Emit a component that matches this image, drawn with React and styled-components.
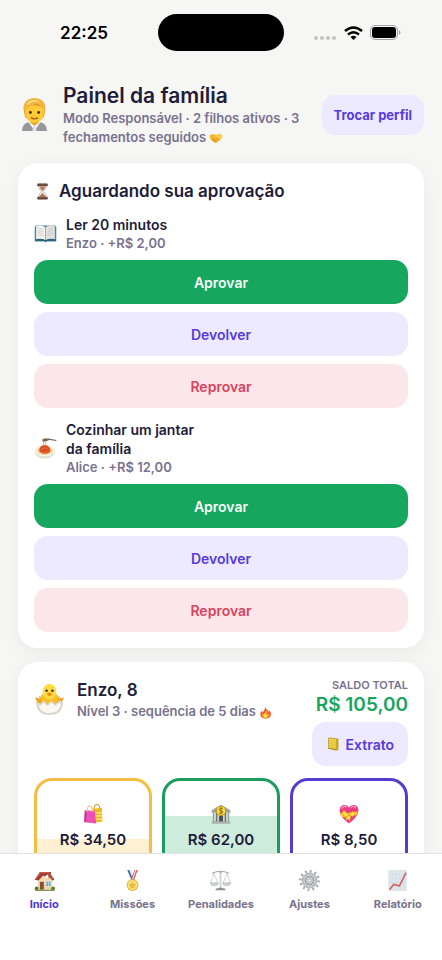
import styled, { createGlobalStyle } from "styled-components";

const GlobalStyle = createGlobalStyle`
  * {
    box-sizing: border-box;
  }
  body {
    margin: 0;
    background: #f6f6f4;
    color: #211c39;
    font-family: Inter, "Liberation Sans", sans-serif;
  }
  h1, h2, p {
    margin: 0;
  }
  button {
    font-family: inherit;
    cursor: pointer;
  }
`;

const Screen = styled.div`
  display: flex;
  flex-direction: column;
  height: 100vh;
`;

const StatusBar = styled.div`
  flex: none;
  display: grid;
  grid-template-columns: 1fr 126px 1fr;
  align-items: center;
  height: 51px;
  padding-top: 14px;
`;

const Clock = styled.span`
  padding-left: 10px;
  text-align: center;
  font-size: 17px;
  line-height: 24px;
  font-weight: 600;
  color: #000;
`;

const Island = styled.div`
  height: 37px;
  border-radius: 19px;
  background: #000;
`;

const StatusIcons = styled.div`
  display: flex;
  align-items: center;
  justify-content: center;
  gap: 7px;
  padding-right: 10px;
`;

const Content = styled.main`
  flex: 1;
  min-height: 0;
  overflow-y: auto;
  scrollbar-width: none;
  display: flex;
  flex-direction: column;
  gap: 14px;
  padding: 31px 18px 24px;
`;

const Header = styled.header`
  display: flex;
  align-items: center;
  gap: 12px;
  padding-bottom: 2px;
`;

const HeaderText = styled.div`
  flex: 1;
  min-width: 0;
`;

const Title = styled.h1`
  font-size: 21px;
  line-height: 27px;
  font-weight: 600;
`;

const Muted = styled.p`
  font-size: ${(p) => p.$size || 13}px;
  line-height: ${(p) => p.$line || 19}px;
  font-weight: 600;
  color: #78728e;
`;

const Button = styled.button`
  display: flex;
  align-items: center;
  justify-content: center;
  gap: 6px;
  flex: none;
  height: ${(p) => (p.$small ? 40 : 44)}px;
  padding: 0 ${(p) => (p.$small ? 12 : 14)}px;
  border: 0;
  border-radius: 14px;
  font-size: ${(p) => (p.$small ? 13 : 14)}px;
  font-weight: ${(p) => (p.$small ? 700 : 600)};
  background: ${(p) => tones[p.$tone].bg};
  color: ${(p) => tones[p.$tone].fg};
`;

const tones = {
  primary: { bg: "#16a65d", fg: "#f4fff9" },
  soft: { bg: "#ede9fe", fg: "#573bdc" },
  danger: { bg: "#fbe6e9", fg: "#d8435f" },
};

const Card = styled.section`
  flex: none;
  padding: 16px;
  border-radius: 20px;
  background: #fff;
  box-shadow: 0 4px 18px rgba(33, 28, 57, 0.05);
`;

const CardTitle = styled.h2`
  display: flex;
  align-items: center;
  gap: 8px;
  font-size: 17px;
  line-height: 24px;
  font-weight: 600;
`;

const Task = styled.article`
  display: flex;
  flex-direction: column;
  gap: 8px;
  margin-top: 12px;
`;

const TaskHead = styled.div`
  display: flex;
  align-items: center;
  gap: 9px;
`;

const TaskText = styled.div`
  max-width: 140px;
`;

const TaskName = styled.p`
  font-size: 14px;
  line-height: 19px;
  font-weight: 600;
`;

const ChildHead = styled.div`
  display: flex;
  align-items: flex-start;
  justify-content: space-between;
`;

const ChildInfo = styled.div`
  display: flex;
  align-items: center;
  gap: 12px;
`;

const ChildName = styled.h2`
  font-size: 17px;
  line-height: 24px;
  font-weight: 600;
`;

const Balance = styled.div`
  display: flex;
  flex-direction: column;
  align-items: flex-end;
`;

const Total = styled.p`
  margin-bottom: 6px;
  font-size: 19px;
  line-height: 23px;
  font-weight: 600;
  color: #16a65d;
`;

const Jars = styled.div`
  display: grid;
  grid-template-columns: repeat(3, 1fr);
  gap: 10px;
  margin-top: 12px;
`;

const Jar = styled.div`
  display: flex;
  flex-direction: column;
  align-items: center;
  gap: 6px;
  height: 120px;
  padding-top: 23px;
  border: 3px solid ${(p) => p.$color};
  border-radius: 18px;
  background: linear-gradient(
    to top,
    ${(p) => p.$fill} ${(p) => p.$level}%,
    #fff ${(p) => p.$level}%
  );
`;

const Amount = styled.span`
  font-size: 15px;
  line-height: 20px;
  font-weight: 600;
`;

const TabBar = styled.nav`
  flex: none;
  display: grid;
  grid-template-columns: repeat(5, 1fr);
  height: 107px;
  padding-top: 16px;
  border-top: 1px solid #e2e1e4;
  background: #fff;
`;

const Tab = styled.a`
  display: flex;
  flex-direction: column;
  align-items: center;
  align-self: start;
  gap: 5px;
  font-size: 11px;
  line-height: 16px;
  font-weight: 700;
  text-decoration: none;
  color: ${(p) => (p.$active ? "#4f35dc" : "#78728e")};
`;

const Glyph = styled.svg`
  display: ${(p) => (p.$inline ? "inline-block" : "block")};
  flex: none;
  vertical-align: -3px;
`;

const glyphs = {
  person: (
    <>
      <path d="M4 32c0-6 3-8 8-9h8c5 1 8 3 8 9z" fill="#96979b" />
      <path d="M10 23l6 9 6-9z" fill="#f4f6fa" />
      <path d="M15 27h2l1 5h-4z" fill="#dfe5ee" />
      <path d="M12 19h8v5l-4 3-4-3z" fill="#e7a51e" />
      <path d="M6 14C4 5 9 1 16 1s12 4 10 13l-1 5-3 1H10l-3-1z" fill="#dc9a20" />
      <path d="M7 11c2-5 16-5 18 0v4c0 5-4 9-9 9s-9-4-9-9z" fill="#ffca38" />
      <path d="M6 13C4 5 9 0 16 0s12 5 10 13l-2-2c0-3-3-4-6-6-3 3-8 3-11 6z" fill="#f2b544" />
      <path d="M9 5c3-4 9-4 12-1-5-1-8 0-12 3z" fill="#ffda78" />
      <circle cx="12" cy="14" r="1.4" fill="#4c3210" />
      <circle cx="20" cy="14" r="1.4" fill="#4c3210" />
      <path d="M12.500 19q3.500 2.500 7 0" fill="none" stroke="#a15b13" strokeWidth="1.300" />
    </>
  ),
  handshake: (
    <>
      <path d="M1 11l6-4 9 2 9-3 6 5-4 8-10 8c-3 1-5-1-7-2l-6-5z" fill="#f7b52d" />
      <path d="M14 12l5-4 8 1 4 3-4 7-8-5-4 2z" fill="#ffcf4d" />
      <path d="M7 18l4 5M11 16l5 7M16 15l6 6" stroke="#c77b14" strokeWidth="1.5" fill="none" />
    </>
  ),
  hourglass: (
    <>
      <path d="M9 4h14c1 6-1 9-5 12 4 3 6 6 5 12H9c-1-6 1-9 5-12C10 13 8 10 9 4z" fill="#e6e7e9" stroke="#b3aeae" />
      <path d="M11 7h10c0 3-2 5-5 8-3-3-5-5-5-8zM16 19c2 3 6 4 6 8H10c0-4 4-5 6-8z" fill="#b87e55" />
      <rect x="6" y="1" width="20" height="5" rx="2" fill="#604033" />
      <rect x="6" y="26" width="20" height="5" rx="2" fill="#604033" />
      <path d="M8 2h16M8 27h16" stroke="#a3806a" />
    </>
  ),
  book: (
    <>
      <path d="M1 7l2-2h26l2 2v20H1z" fill="#4589a8" />
      <path d="M2 24h12l2 2 2-2h12v2H18l-2 2-2-2H2z" fill="#28566f" />
      <path d="M3 6c5-2 10-1 13 2v17c-4-2-8-2-13-1z" fill="#f4f3ee" />
      <path d="M29 6c-5-2-10-1-13 2v17c4-2 8-2 13-1z" fill="#e2e2df" />
      <path d="M16 8v17" stroke="#a9a7a1" strokeWidth="1.5" />
      <path d="M5 9l8 1M5 12l8 1M5 15l8 1M5 18l8 1M19 10l8-1M19 13l8-1M19 16l8-1M19 19l8-1" stroke="#c4c3c1" />
    </>
  ),
  spaghetti: (
    <>
      <ellipse cx="15" cy="21" rx="14" ry="9" fill="#e3dfd1" />
      <ellipse cx="15" cy="19" rx="14" ry="8" fill="#f6f2e5" />
      <ellipse cx="15" cy="19" rx="11" ry="6" fill="#f3d99a" />
      <path d="M7 19c1-6 4-8 8-8s8 4 8 8c-2 5-13 6-16 0z" fill="#da4d22" />
      <path d="M10 17q5-4 10 0M9 20q6 4 12-1" stroke="#f17738" fill="none" />
      <path d="M14 3l-1 9M17 3l-1 8M12 5c4-5 7-3 7 0" stroke="#e7bb53" strokeWidth="1.5" fill="none" />
      <path d="M12 4l8-1 11 2M12 6l8-2" stroke="#65656c" strokeWidth="1.5" fill="none" />
    </>
  ),
  chick: (
    <>
      <path d="M4 20L1 14l5 1-1-3 6 4h10l6-4-1 3 5-1-3 6z" fill="#eda421" />
      <ellipse cx="16" cy="15" rx="9" ry="8" fill="#fabc2b" />
      <ellipse cx="16" cy="8" rx="7" ry="8" fill="#ffdc3d" />
      <circle cx="13" cy="7" r="1.3" fill="#3f321b" />
      <circle cx="19" cy="7" r="1.3" fill="#3f321b" />
      <path d="M13 10l3-1 3 1-3 3z" fill="#ee8124" />
      <path d="M2 18l4 3 4-4 4 4 4-4 4 4 4-4 4 2c0 8-5 13-14 13S2 27 2 18z" fill="#d9d6ce" />
      <path d="M4 20l2 3 4-4 4 4 4-4 4 4 4-4 2 2c-2 7-6 9-12 9S6 27 4 20z" fill="#faf7ef" />
    </>
  ),
  fire: (
    <>
      <path d="M15 1c1 7 8 8 8 14l3-4c8 11 1 20-10 20S-1 21 7 11l2 5c3-4 6-8 6-15z" fill="#f5532d" />
      <path d="M17 8c0 5 6 8 5 13l3-3c3 7-2 12-9 12S5 24 9 17l2 3c3-3 6-6 6-12z" fill="#ff9b2b" />
      <path d="M16 17c0 4 5 5 4 9-1 3-8 4-9-1-1-3 3-4 5-8z" fill="#ffe45d" />
    </>
  ),
  ledger: (
    <>
      <path d="M5 3l3-2 20 3v25l-4 2L5 27z" fill="#9f8b18" />
      <path d="M7 2l17 3v23L7 25z" fill="#e9ca3d" />
      <path d="M24 5l4-1v25l-4 1z" fill="#c4a82c" />
      <path d="M8 4l14 3" stroke="#ffe872" />
      <path d="M6 7h3M6 12h3M6 17h3M6 22h3" stroke="#f9f4cc" strokeWidth="1.5" />
    </>
  ),
  bags: (
    <>
      <path d="M15 8l15-2 1 22-14 2z" fill="#e9b91f" />
      <path d="M16 14h15M16 19h15M16 24h15" stroke="#fff08b" strokeWidth="2" />
      <path d="M18 8C17-1 26-2 27 7" stroke="#dc9e25" strokeWidth="1.8" fill="none" />
      <path d="M3 10l16 1 2 20-19-2z" fill="#ed4fb6" />
      <path d="M3 10l3 3-2 16-2-1z" fill="#bf318d" />
      <path d="M7 13C5 1 15-1 16 13" stroke="#ffb88b" strokeWidth="1.8" fill="none" />
    </>
  ),
  bank: (
    <>
      <path d="M1 10L16 1l15 9v4H1z" fill="#9ba4a1" />
      <path d="M3 14h26v15H3z" fill="#66736f" />
      <path d="M4 14h4v14H4zM10 14h4v14h-4zM18 14h4v14h-4zM24 14h4v14h-4z" fill="#cdd2cd" />
      <path d="M13 19h6v10h-6z" fill="#484e4c" />
      <path d="M1 28h30v4H1z" fill="#b3b9b5" />
      <circle cx="16" cy="11" r="8" fill="#c79916" />
      <circle cx="16" cy="11" r="6.5" fill="#ffdc40" />
      <path d="M19 8c-2-2-6-1-6 1 0 3 6 1 6 4 0 2-4 3-6 1M16 5v12" fill="none" stroke="#795f19" strokeWidth="1.4" />
    </>
  ),
  heart: (
    <>
      <path d="M16 31C8 25 1 18 1 10 1 1 12-1 16 6c4-7 15-5 15 4 0 8-7 15-15 21z" fill="#ed3d80" />
      <path d="M4 8c1-4 5-5 8-3M19 6c3-4 7-2 8 1" fill="none" stroke="#ff98bf" strokeWidth="2" />
      <path d="M2 14l10 2 6-3 12-1-2 6-10 1-6 3-9-2z" fill="#f9cb29" />
      <path d="M15 17l-7-7-3 4 4 6 6-1 7-7 4 3-4 5zM14 18l-4 8 5-2 2 4 2-10z" fill="#ffe04a" stroke="#db9d20" strokeWidth=".8" />
    </>
  ),
  house: (
    <>
      <path d="M6 12h22v18H6z" fill="#f1d4a5" />
      <path d="M22 3h4v9h-4z" fill="#9e5148" />
      <path d="M1 15L9 3h14l8 12-3 1-7-9-14 9z" fill="#9d3931" />
      <path d="M3 14L10 4h12l7 9" stroke="#c65c47" strokeWidth="2" fill="none" />
      <path d="M7 16L14 8l8 8v3H7z" fill="#f4dab0" />
      <path d="M9 18h6v12H9z" fill="#86503a" />
      <path d="M18 17h8v8h-8z" fill="#519dc0" stroke="#eee8ce" strokeWidth="1.5" />
      <path d="M22 17v8M18 21h8" stroke="#dbe9e7" />
      <circle cx="4" cy="28" r="3" fill="#4e832c" />
      <circle cx="29" cy="28" r="3" fill="#4e832c" />
      <path d="M2 30h29v2H2z" fill="#819749" />
    </>
  ),
  medal: (
    <>
      <path d="M8 0h5l6 15-4 2z" fill="#376db2" />
      <path d="M11 0h2l6 14-2 1z" fill="#f5eff0" />
      <path d="M19 0h5l-6 16-4-3z" fill="#d95458" />
      <path d="M21 0l-5 14" stroke="#fff" strokeWidth="1.5" fill="none" />
      <circle cx="16" cy="23" r="9" fill="#dfae32" />
      <circle cx="16" cy="23" r="7" fill="#f9df79" stroke="#fff0a2" />
      <path d="M16 17l2 4 4 1-3 3v4l-3-2-4 2 1-4-3-3 4-1z" fill="#e9be43" />
    </>
  ),
  scales: (
    <>
      <path d="M3 5q13-6 26 0" stroke="#91979b" strokeWidth="1.4" fill="none" />
      <path d="M16 2v26" stroke="#b5babc" strokeWidth="2.4" />
      <path d="M16 3v25" stroke="#e4e7e8" />
      <path d="M6 5L1 20h11zM26 5l-6 15h11z" fill="none" stroke="#b9bdbf" />
      <path d="M0 20h13c-2 5-11 5-13 0zM19 20h13c-2 5-11 5-13 0z" fill="#d4d8da" stroke="#989fa3" strokeWidth=".8" />
      <path d="M8 31c0-3 3-3 6-4h4c3 1 6 1 6 4z" fill="#8d9498" />
      <circle cx="16" cy="3" r="2" fill="#b5babc" />
    </>
  ),
  gear: (
    <>
      <circle cx="16" cy="16" r="14" fill="none" stroke="#a4a8aa" strokeWidth="4" strokeDasharray="2.800 4.530" />
      <circle cx="16" cy="16" r="11.500" fill="#bfc2c3" stroke="#a1a5a7" />
      <circle cx="16" cy="16" r="8" fill="#a0a4a6" stroke="#e0e2e3" />
      <circle cx="16" cy="16" r="5" fill="#d2d5d6" />
      <circle cx="16" cy="16" r="2.500" fill="#f9f9f9" stroke="#8d9194" />
    </>
  ),
  chart: (
    <>
      <path d="M2 0h28v32H2z" fill="#dfe7ec" />
      <path d="M8 0v32M14 0v32M20 0v32M26 0v32M2 7h28M2 13h28M2 19h28M2 25h28" stroke="#d3dee4" />
      <path d="M4 30l6-8 9 2L29 4" fill="none" stroke="#d8605e" strokeWidth="2.400" />
    </>
  ),
};

const Emoji = ({ name, size = 20, inline }) => (
  <Glyph width={size} height={size} viewBox="0 0 32 32" $inline={inline} aria-hidden="true">
    {glyphs[name]}
  </Glyph>
);

const tasks = [
  { icon: "book", name: "Ler 20 minutos", info: "Enzo · +R$ 2,00" },
  { icon: "spaghetti", name: "Cozinhar um jantar da família", info: "Alice · +R$ 12,00" },
];

const jars = [
  { icon: "bags", amount: "R$ 34,50", color: "#f5bd42", fill: "#fdf0d3", level: 49 },
  { icon: "bank", amount: "R$ 62,00", color: "#1b9e5d", fill: "#cdecdc", level: 69 },
  { icon: "heart", amount: "R$ 8,50", color: "#573bcf", fill: "#ddd6fa", level: 17 },
];

const tabs = [
  { icon: "house", label: "Início" },
  { icon: "medal", label: "Missões" },
  { icon: "scales", label: "Penalidades" },
  { icon: "gear", label: "Ajustes" },
  { icon: "chart", label: "Relatório" },
];

const App = () => {
  return (
    <Screen>
      <GlobalStyle />
      <StatusBar>
        <Clock>22:25</Clock>
        <Island />
        <StatusIcons>
          <svg width="23" height="14" viewBox="0 0 23 14" fill="#c3c3c2">
            <circle cx="2" cy="12" r="2" />
            <circle cx="8" cy="12" r="2" />
            <circle cx="14" cy="12" r="2" />
            <circle cx="20" cy="12" r="2" />
          </svg>
          <svg width="19" height="14" viewBox="0 0 19 14">
            <path d="M1 5q8.500-7 17 0" fill="none" stroke="#000" strokeWidth="2.600" />
            <path d="M4 8.500q5.500-4.500 11 0" fill="none" stroke="#000" strokeWidth="2.500" />
            <path d="M6.500 11q3-2.500 6 0l-3 3z" />
          </svg>
          <svg width="32" height="15" viewBox="0 0 32 15">
            <rect x=".5" y=".5" width="27" height="14" rx="4.500" fill="none" stroke="#a2a2a1" />
            <rect x="2" y="2" width="24" height="11" rx="3" />
            <path d="M29 5q3 2.500 0 5z" fill="#a2a2a1" />
          </svg>
        </StatusIcons>
      </StatusBar>

      <Content>
        <Header>
          <Emoji name="person" size={33} />
          <HeaderText>
            <Title>Painel da família</Title>
            <Muted>
              Modo Responsável · 2 filhos ativos · 3 fechamentos seguidos{" "}
              <Emoji name="handshake" size={14} inline />
            </Muted>
          </HeaderText>
          <Button $tone="soft" $small>
            Trocar perfil
          </Button>
        </Header>

        <Card>
          <CardTitle>
            <Emoji name="hourglass" size={17} />
            Aguardando sua aprovação
          </CardTitle>
          {tasks.map((task) => (
            <Task key={task.name}>
              <TaskHead>
                <Emoji name={task.icon} size={23} />
                <TaskText>
                  <TaskName>{task.name}</TaskName>
                  <Muted $line={18}>{task.info}</Muted>
                </TaskText>
              </TaskHead>
              <Button $tone="primary">Aprovar</Button>
              <Button $tone="soft">Devolver</Button>
              <Button $tone="danger">Reprovar</Button>
            </Task>
          ))}
        </Card>

        <Card>
          <ChildHead>
            <ChildInfo>
              <Emoji name="chick" size={31} />
              <div>
                <ChildName>Enzo, 8</ChildName>
                <Muted>
                  Nível 3 · sequência de 5 dias <Emoji name="fire" size={13} inline />
                </Muted>
              </div>
            </ChildInfo>
            <Balance>
              <Muted $size={11} $line={15}>
                SALDO TOTAL
              </Muted>
              <Total>R$ 105,00</Total>
              <Button $tone="soft">
                <Emoji name="ledger" size={14} />
                Extrato
              </Button>
            </Balance>
          </ChildHead>
          <Jars>
            {jars.map((jar) => (
              <Jar key={jar.icon} $color={jar.color} $fill={jar.fill} $level={jar.level}>
                <Emoji name={jar.icon} />
                <Amount>{jar.amount}</Amount>
              </Jar>
            ))}
          </Jars>
        </Card>
      </Content>

      <TabBar>
        {tabs.map((tab, i) => (
          <Tab key={tab.icon} href={"#" + tab.icon} $active={i === 0}>
            <Emoji name={tab.icon} size={21} />
            {tab.label}
          </Tab>
        ))}
      </TabBar>
    </Screen>
  );
};

export default App;
